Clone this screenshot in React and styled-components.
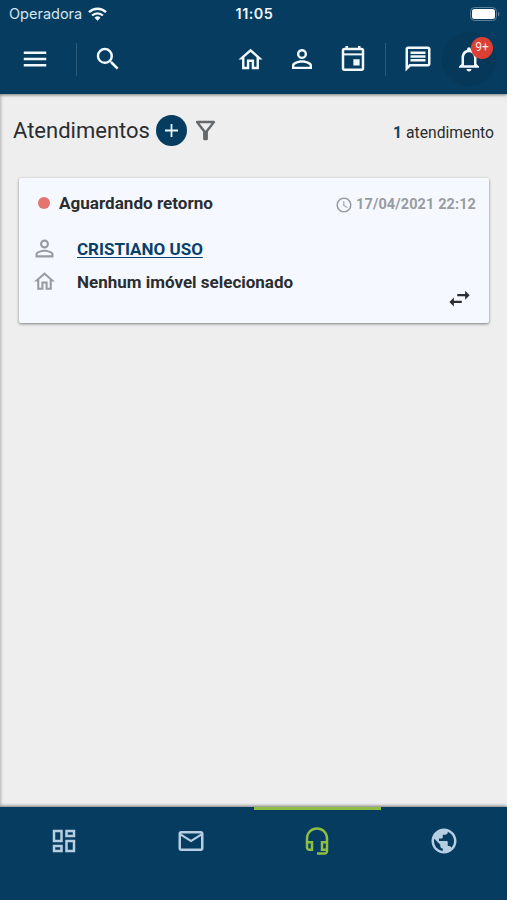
import styled, { createGlobalStyle } from 'styled-components';
import {
	MdAccessTime,
	MdMailOutline,
	MdMenu,
	MdNotificationsNone,
	MdOutlineDashboard,
	MdOutlineFilterAlt,
	MdOutlineHeadsetMic,
	MdOutlineMessage,
	MdPersonOutline,
	MdPublic,
	MdSearch,
	MdSwapHoriz,
} from 'react-icons/md';

const GlobalStyle = createGlobalStyle`
	:root {
		--color-primary: #053c5f;
		--color-background: #eeeeee;
		--color-card: #f5f9ff;
		--color-text: #2b2d30;
		--color-muted: #999c9f;
		--color-active: #8fbe45;
	}

	* {
		box-sizing: border-box;
	}

	body {
		margin: 0;
		font-family: Roboto, sans-serif;
		color: var(--color-text);
		background: var(--color-background);
	}

	svg {
		display: block;
		flex-shrink: 0;
	}
`;

const Screen = styled.div`
	width: 507px;
	height: 900px;
	display: flex;
	flex-direction: column;
	overflow: hidden;
`;

const Header = styled.header`
	height: 94px;
	background-color: var(--color-primary);
	color: #f1f8fe;
	box-shadow: 0 1px 3px rgba(0, 0, 0, 0.5);
	z-index: 1;
`;

const StatusBar = styled.div`
	height: 27px;
	padding: 0 7px 0 9px;
	display: grid;
	grid-template-columns: 1fr auto 1fr;
	align-items: center;
	font-family: Inter, sans-serif;
`;

const Carrier = styled.div`
	display: flex;
	align-items: center;
	gap: 6px;
	color: #d5e4ef;
	font-size: 14.5px;
`;

const Clock = styled.div`
	font-size: 14.4px;
	font-weight: 600;
	letter-spacing: 0.5px;
`;

const Battery = styled.svg`
	justify-self: end;
`;

const Toolbar = styled.nav`
	height: 64px;
	display: flex;
	align-items: center;
	padding: 0 11px 0 9px;
`;

const ToolButton = styled.button`
	position: relative;
	width: ${({ $width }) => $width || 51}px;
	height: 54px;
	padding: 0;
	border: 0;
	border-radius: 50%;
	flex-shrink: 0;
	display: flex;
	align-items: center;
	justify-content: center;
	color: inherit;
	font-family: inherit;
	background: ${({ $pressed }) => ($pressed ? '#053859' : 'none')};
`;

const Divider = styled.span`
	width: 1px;
	height: 33px;
	margin: ${({ $margin }) => $margin};
	background-color: #2b5b7a;
`;

const Spacer = styled.span`
	flex: 1;
`;

const Badge = styled.span`
	position: absolute;
	top: 5px;
	right: 3px;
	width: 22px;
	height: 22px;
	border-radius: 50%;
	background-color: #dc4034;
	color: #ffe9e5;
	font-size: 12px;
	line-height: 21px;
	text-align: center;
`;

const Content = styled.main`
	flex: 1;
	padding: 19px 13px 0;
	box-shadow: inset 3px 0 3px -2px rgba(0, 0, 0, 0.25);
`;

const TitleRow = styled.div`
	height: 36px;
	display: flex;
	align-items: center;

	h1 {
		margin: 0;
		font-size: 22px;
		font-weight: 400;
		line-height: 36px;
	}

	> svg {
		margin-top: -2px;
	}
`;

const AddButton = styled.button`
	width: 31px;
	height: 31px;
	margin: -1px 4px 0 6px;
	padding: 0;
	border: 0;
	border-radius: 50%;
	display: flex;
	align-items: center;
	justify-content: center;
	background-color: var(--color-primary);
	color: #e9f4fb;
`;

const Total = styled.p`
	margin: 2px 0 0 auto;
	font-size: 15.7px;

	b {
		color: #08476c;
	}
`;

const Card = styled.article`
	height: 145px;
	margin: 29px 5px 0 6px;
	padding: 14px 13px 0 13px;
	display: flex;
	flex-direction: column;
	border-radius: 2px;
	background-color: var(--color-card);
	box-shadow: 0 1px 3px rgba(0, 0, 0, 0.48);
`;

const CardHeader = styled.div`
	height: 22px;
	display: flex;
	align-items: center;
`;

const StatusDot = styled.span`
	width: 12px;
	height: 12px;
	margin: -1px 9px 0 6px;
	border-radius: 50%;
	background-color: #e4746d;
`;

const Status = styled.strong`
	margin-top: -1px;
	font-size: 17.1px;
`;

const DateTime = styled.time`
	margin: 3px 0 0 auto;
	display: flex;
	align-items: center;
	gap: 3px;
	color: var(--color-muted);
	font-size: 14.5px;
	font-weight: 700;
	letter-spacing: 0.1px;
`;

const Detail = styled.div`
	height: 33px;
	margin-top: ${({ $first }) => ($first ? 18 : 0)}px;
	display: flex;
	align-items: center;
	font-size: 17px;
	font-weight: 700;

	a {
		color: #08406a;
		text-decoration: underline;
		text-decoration-thickness: 1px;
		text-underline-offset: 2px;
	}
`;

const DetailIcon = styled.span`
	width: 45px;
	margin: 0 1px 0 -1px;
	padding-left: ${({ $inset }) => $inset || 0}px;
	color: var(--color-muted);
`;

const CardActions = styled.div`
	display: flex;
	justify-content: flex-end;
	margin: -13px 3px 0 0;
`;

const BottomNav = styled.nav`
	height: 93px;
	padding-left: 1px;
	display: grid;
	grid-template-columns: repeat(4, 1fr);
	background-color: var(--color-primary);
	box-shadow: 0 -1px 3px rgba(0, 0, 0, 0.5);
	z-index: 1;
`;

const Tab = styled.a`
	height: 65px;
	display: flex;
	align-items: center;
	justify-content: center;
	border-top: 3px solid ${({ $active }) => ($active ? 'var(--color-active)' : 'transparent')};
	color: ${({ $active }) => ($active ? 'var(--color-active)' : '#b5cee2')};
`;

const HomeIcon = ({ size }) => (
	<svg width={size} height={size} viewBox="0 0 24 24" fill="currentColor">
		<path d="M12 5.69l5 4.5V18h-2v-6H9v6H7v-7.81l5-4.5M12 3L2 12h3v8h6v-6h2v6h6v-8h3L12 3z" />
	</svg>
);

const CalendarIcon = ({ size }) => (
	<svg width={size} height={size} viewBox="0 0 24 24" fill="none" stroke="currentColor" strokeWidth="2">
		<rect x="4" y="4" width="16" height="16.5" rx="1.2" />
		<path d="M4 8.3h16" strokeWidth="1.6" />
		<path d="M7 1.5V4M17 1.5V4" />
		<rect x="12.3" y="12.2" width="5" height="5" fill="currentColor" stroke="none" />
	</svg>
);

const PlusIcon = () => (
	<svg width="13" height="13" viewBox="0 0 13 13" stroke="currentColor" strokeWidth="1.8">
		<path d="M6.5 0v13M0 6.5h13" />
	</svg>
);

const WifiIcon = () => (
	<svg width="19" height="14" viewBox="0 0 19 14" fill="none" stroke="#f1f8fe" strokeWidth="2.4">
		<path d="M1 5.2a12.2 12.2 0 0 1 17 0" />
		<path d="M4.1 8.5a7.8 7.8 0 0 1 10.8 0" />
		<path d="M9.5 13.7l-3-3a4.3 4.3 0 0 1 6 0z" fill="#f1f8fe" stroke="none" />
	</svg>
);

const tabs = [
	{ id: 'painel', icon: <MdOutlineDashboard size={30} /> },
	{ id: 'mensagens', icon: <MdMailOutline size={30} /> },
	{ id: 'atendimentos', icon: <MdOutlineHeadsetMic size={30} />, active: true },
	{ id: 'site', icon: <MdPublic size={30} /> },
];

const App = () => {
	return (
		<>
			<GlobalStyle />
			<Screen>
				<Header>
					<StatusBar>
						<Carrier>
							Operadora
							<WifiIcon />
						</Carrier>
						<Clock>11:05</Clock>
						<Battery width="30" height="14" viewBox="0 0 30 14">
							<rect x="0.5" y="0.5" width="26" height="13" rx="4" fill="none" stroke="#58809b" />
							<rect x="2" y="2" width="23" height="10" rx="2.5" fill="#fff" />
							<path d="M28 4.5v5c2-1 2-4 0-5z" fill="#58809b" />
						</Battery>
					</StatusBar>
					<Toolbar>
						<ToolButton $width={52}>
							<MdMenu size={30} />
						</ToolButton>
						<Divider $margin="0 0 0 15px" />
						<ToolButton $width={62}>
							<MdSearch size={30} />
						</ToolButton>
						<Spacer />
						<ToolButton>
							<HomeIcon size={29} />
						</ToolButton>
						<ToolButton>
							<MdPersonOutline size={30} />
						</ToolButton>
						<ToolButton>
							<CalendarIcon size={30} />
						</ToolButton>
						<Divider $margin="0 8px 0 7px" />
						<ToolButton $width={48}>
							<MdOutlineMessage size={30} />
						</ToolButton>
						<ToolButton $width={54} $pressed>
							<MdNotificationsNone size={30} />
							<Badge>9+</Badge>
						</ToolButton>
					</Toolbar>
				</Header>
				<Content>
					<TitleRow>
						<h1>Atendimentos</h1>
						<AddButton>
							<PlusIcon />
						</AddButton>
						<MdOutlineFilterAlt size={29} color="#66696b" />
						<Total>
							<b>1</b> atendimento
						</Total>
					</TitleRow>
					<Card>
						<CardHeader>
							<StatusDot />
							<Status>Aguardando retorno</Status>
							<DateTime>
								<MdAccessTime size={18} />
								17/04/2021 22:12
							</DateTime>
						</CardHeader>
						<Detail $first>
							<DetailIcon>
								<MdPersonOutline size={27} />
							</DetailIcon>
							<a>CRISTIANO USO</a>
						</Detail>
						<Detail>
							<DetailIcon $inset={1}>
								<HomeIcon size={25} />
							</DetailIcon>
							Nenhum imóvel selecionado
						</Detail>
						<CardActions>
							<MdSwapHoriz size={27} />
						</CardActions>
					</Card>
				</Content>
				<BottomNav>
					{tabs.map(({ id, icon, active }) => (
						<Tab key={id} $active={active}>
							{icon}
						</Tab>
					))}
				</BottomNav>
			</Screen>
		</>
	);
};

export default App;
